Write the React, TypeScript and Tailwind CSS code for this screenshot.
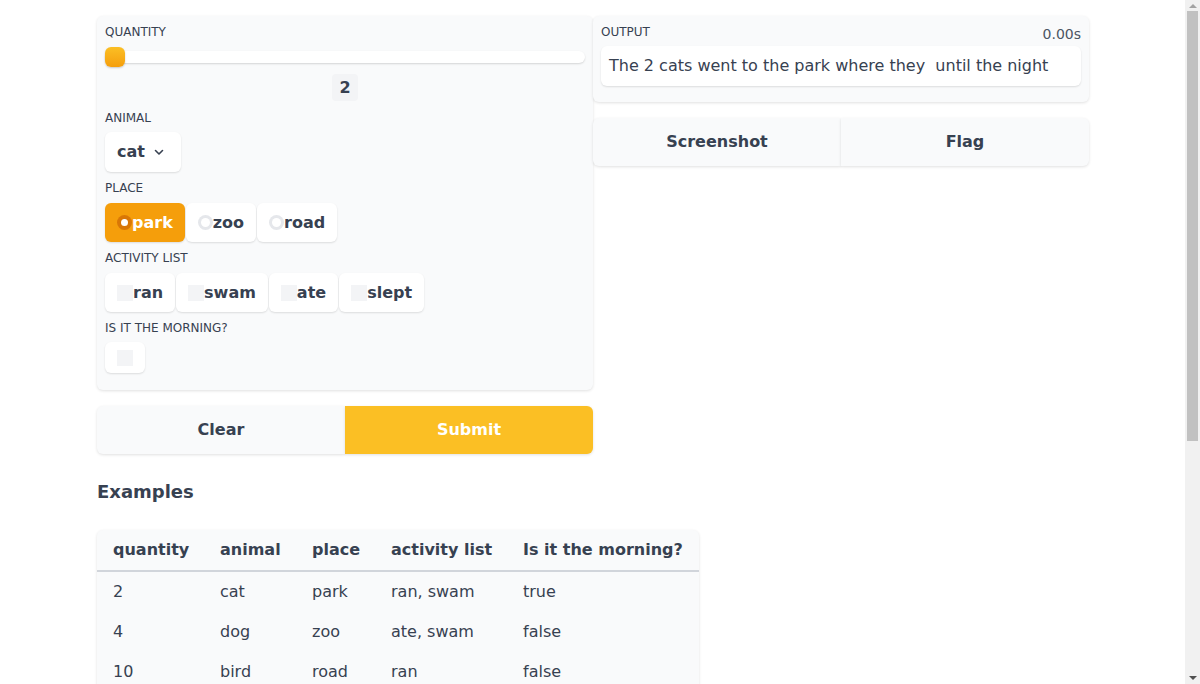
import React from "react";

const font = { fontFamily: '"DejaVu Sans", sans-serif' };

function Label({ children }: { children: React.ReactNode }) {
  return <div className="text-[12px] leading-4 uppercase text-[#374151]">{children}</div>;
}

function Radio({ label, checked }: { label: string; checked?: boolean }) {
  return (
    <div
      className={`h-[39px] flex items-center pl-3 pr-3 rounded-md text-[16px] font-bold shadow-[0_1px_2px_rgba(0,0,0,0.12)] ${
        checked ? "bg-[#f59e0b] text-white" : "bg-white text-[#374151]"
      }`}
    >
      <span
        className={`w-[15px] h-[15px] rounded-full flex items-center justify-center ${
          checked ? "bg-[#d97706]" : "bg-[#e5e7eb]"
        }`}
      >
        <span className={`rounded-full bg-white ${checked ? "w-[7px] h-[7px]" : "w-[9px] h-[9px]"}`} />
      </span>
      <span>{label}</span>
    </div>
  );
}

function Check({ label }: { label: string }) {
  return (
    <div className="h-[39px] flex items-center pl-3 pr-3 rounded-md bg-white text-[16px] font-bold text-[#374151] shadow-[0_1px_2px_rgba(0,0,0,0.12)]">
      <span className="w-4 h-4 bg-[#f3f4f6]" />
      <span>{label}</span>
    </div>
  );
}

function Scrollbar() {
  return (
    <div className="w-[15px] h-full bg-[#f1f1f1] flex flex-col items-center shrink-0">
      <div className="h-[11px] flex items-center justify-center">
        <svg width="8" height="5" viewBox="0 0 8 5">
          <path d="M0 5 L4 1 L8 5 Z" fill="#a3a3a3" />
        </svg>
      </div>
      <div className="w-[11px] h-[430px] bg-[#c1c1c1]" />
      <div className="flex-1" />
      <div className="h-[11px] flex items-center justify-center">
        <svg width="8" height="5" viewBox="0 0 8 5">
          <path d="M0 0 L8 0 L4 4 Z" fill="#505050" />
        </svg>
      </div>
    </div>
  );
}

export default function App() {
  const rows = [
    ["2", "cat", "park", "ran, swam", "true"],
    ["4", "dog", "zoo", "ate, swam", "false"],
    ["10", "bird", "road", "ran", "false"],
    ["8", "cat", "zoo", "ate", "true"],
  ];
  const heads = ["quantity", "animal", "place", "activity list", "Is it the morning?"];
  return (
    <div className="bg-white h-[684px] overflow-hidden flex text-[#374151]" style={font}>
      <div className="flex-1 pl-[97px] pt-4">
        <div className="w-[992px]">
          <div className="flex items-start">
            {/* Left column */}
            <div className="w-[496px] flex flex-col">
              <div className="bg-[#f9fafb] rounded-md shadow-[0_1px_3px_rgba(0,0,0,0.12)] px-2 pt-2 pb-[17px] flex flex-col">
                <Label>Quantity</Label>
                <div className="mt-[7px] relative h-5 flex items-center">
                  <div className="w-full h-3 bg-white rounded-md shadow-[0_1px_2px_rgba(0,0,0,0.15)]" />
                  <div className="absolute left-0 top-0 w-5 h-5 rounded-md bg-gradient-to-b from-[#fbbf24] to-[#f59e0b] shadow-[0_1px_2px_rgba(0,0,0,0.2)]" />
                </div>
                <div className="mt-[7px] flex justify-center">
                  <div className="w-[26px] h-[27px] bg-[#f3f4f6] rounded flex items-center justify-center text-[16px] font-bold">
                    2
                  </div>
                </div>
                <div className="mt-[9px]">
                  <Label>Animal</Label>
                </div>
                <div className="mt-[6px]">
                  <div className="w-[76px] h-10 bg-white rounded-md shadow-[0_1px_2px_rgba(0,0,0,0.12)] flex items-center pl-3 gap-[9px] text-[16px] font-bold">
                    <span>cat</span>
                    <svg width="10" height="10" viewBox="0 0 10 10" fill="none">
                      <path d="M1.5 3.5 L5 7 L8.5 3.5" stroke="#374151" strokeWidth="1.6" strokeLinecap="round" strokeLinejoin="round" />
                    </svg>
                  </div>
                </div>
                <div className="mt-2">
                  <Label>Place</Label>
                </div>
                <div className="mt-[7px] flex gap-px">
                  <Radio label="park" checked />
                  <Radio label="zoo" />
                  <Radio label="road" />
                </div>
                <div className="mt-2">
                  <Label>Activity list</Label>
                </div>
                <div className="mt-[7px] flex gap-px">
                  <Check label="ran" />
                  <Check label="swam" />
                  <Check label="ate" />
                  <Check label="slept" />
                </div>
                <div className="mt-2">
                  <Label>Is it the morning?</Label>
                </div>
                <div className="mt-[6px]">
                  <div className="w-10 h-[31px] bg-white rounded-md shadow-[0_1px_2px_rgba(0,0,0,0.12)] flex items-center justify-center">
                    <span className="w-4 h-4 bg-[#f3f4f6]" />
                  </div>
                </div>
              </div>
              <div className="mt-4 flex">
                <div className="flex-1 h-12 bg-[#f9fafb] rounded-l-md shadow-[0_1px_3px_rgba(0,0,0,0.12)] flex items-center justify-center text-[16px] font-bold">
                  Clear
                </div>
                <div className="flex-1 h-12 bg-[#fbbf24] rounded-r-md shadow-[0_1px_3px_rgba(0,0,0,0.12)] flex items-center justify-center text-[16px] font-bold text-white">
                  Submit
                </div>
              </div>
            </div>
            {/* Right column */}
            <div className="w-[496px] flex flex-col">
              <div className="bg-[#f9fafb] rounded-md shadow-[0_1px_3px_rgba(0,0,0,0.12)] px-2 pt-2 pb-4">
                <div className="flex justify-between items-start">
                  <Label>Output</Label>
                  <span className="text-[14px] leading-5 text-[#4b5563] -mb-[1px]">0.00s</span>
                </div>
                <div className="mt-[3px] h-10 bg-white rounded-md shadow-[0_1px_2px_rgba(0,0,0,0.12)] flex items-center px-2 text-[16px] text-[#374151]">
                  The 2 cats went to the park where they&nbsp; until the night
                </div>
              </div>
              <div className="mt-4 flex">
                <div className="flex-1 h-12 bg-[#f9fafb] rounded-l-md shadow-[0_1px_3px_rgba(0,0,0,0.12)] flex items-center justify-center text-[16px] font-bold">
                  Screenshot
                </div>
                <div className="flex-1 h-12 bg-[#f9fafb] rounded-r-md shadow-[0_1px_3px_rgba(0,0,0,0.12)] flex items-center justify-center text-[16px] font-bold">
                  Flag
                </div>
              </div>
            </div>
          </div>

          <div className="mt-[26px] text-[18px] font-bold leading-6">Examples</div>

          <div className="mt-[26px] w-[602px] bg-[#f9fafb] rounded-md shadow-[0_1px_3px_rgba(0,0,0,0.12)]">
            <table className="w-full table-fixed text-[16px] text-left border-separate border-spacing-0">
              <colgroup>
                <col className="w-[107px]" />
                <col className="w-[92px]" />
                <col className="w-[79px]" />
                <col className="w-[132px]" />
                <col className="w-[192px]" />
              </colgroup>
              <thead>
                <tr>
                  {heads.map((h) => (
                    <th key={h} className="pl-4 pr-0 h-[42px] font-bold whitespace-nowrap border-b-2 border-[#d1d5db]">
                      {h}
                    </th>
                  ))}
                </tr>
              </thead>
              <tbody>
                {rows.map((r, i) => (
                  <tr key={i}>
                    {r.map((c, j) => (
                      <td key={j} className="pl-4 pr-0 h-10 whitespace-nowrap">
                        {c}
                      </td>
                    ))}
                  </tr>
                ))}
              </tbody>
            </table>
          </div>
        </div>
      </div>
      <Scrollbar />
    </div>
  );
}
